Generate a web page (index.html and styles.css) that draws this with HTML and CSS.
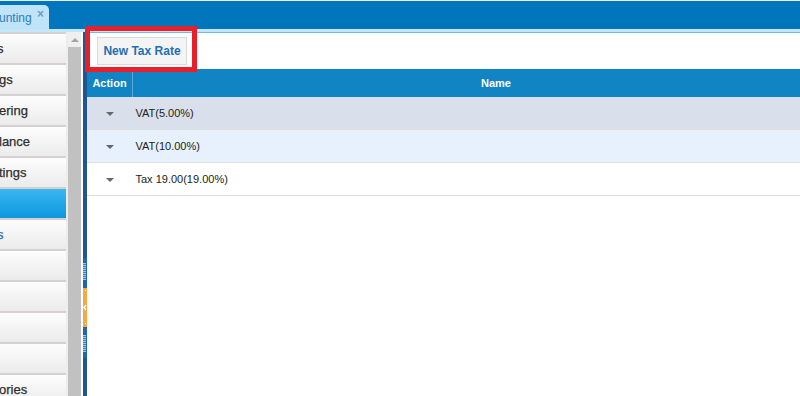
FILE: index.html
```html
<!DOCTYPE html>
<html lang="en">
<head>
  <meta charset="UTF-8">
  <meta name="viewport" content="width=device-width, initial-scale=1.0">
  <title>Tax Rates</title>
  <link rel="stylesheet" href="styles.css">
</head>
<body>
  <div class="topbar">
    <div class="tab">
      <span class="tab-title">unting</span>
      <span class="tab-close">×</span>
    </div>
  </div>
  <div class="stripe"></div>

  <div class="main">
    <ul class="nav">
      <li class="cut">s</li>
      <li>gs</li>
      <li>ering</li>
      <li>lance</li>
      <li>tings</li>
      <li class="active"></li>
      <li class="link cut">s</li>
      <li></li>
      <li></li>
      <li></li>
      <li></li>
      <li>ories</li>
    </ul>
    <div class="scroll-gap"></div>
    <div class="scrollbar">
      <div class="scroll-up"><span class="arrow-up"></span></div>
    </div>
    <div class="white-gap"></div>
    <div class="splitter">
      <div class="splitter-zone">
        <div class="ribs"></div>
        <div class="handle">
          <svg width="4" height="40" viewBox="0 0 4 40">
            <rect x="2" y="2" width="1" height="1" fill="#fff"/>
            <path d="M3 17 L1 19.5 L3 22" stroke="#fff" stroke-width="1.4" fill="none"/>
            <rect x="2" y="35" width="1" height="1" fill="#fff"/>
          </svg>
        </div>
        <div class="ribs"></div>
      </div>
    </div>

    <div class="content">
      <div class="toolbar">
        <button class="btn">New Tax Rate</button>
      </div>
      <table class="grid">
        <thead>
          <tr>
            <th class="col-action">Action</th>
            <th class="col-name">Name</th>
          </tr>
        </thead>
        <tbody>
          <tr class="hover">
            <td class="col-action"><span class="caret"></span></td>
            <td>VAT(5.00%)</td>
          </tr>
          <tr class="alt">
            <td class="col-action"><span class="caret"></span></td>
            <td>VAT(10.00%)</td>
          </tr>
          <tr>
            <td class="col-action"><span class="caret"></span></td>
            <td>Tax 19.00(19.00%)</td>
          </tr>
        </tbody>
      </table>
    </div>
  </div>

  <div class="highlight"></div>
</body>
</html>
```

FILE: styles.css
```css
body {
  margin: 0;
  height: 396px;
  overflow: hidden;
  font-family: 'Liberation Sans', Arial, sans-serif;
  background: #fff;
}
.topbar {
  height: 28px;
  background: #0276bd;
  border-top: 1px solid #e6f1f9;
  display: flex;
  align-items: flex-end;
}
.tab {
  width: 49px;
  height: 24px;
  background: #bfe4f9;
  border-top-right-radius: 5px;
  display: flex;
  align-items: center;
  justify-content: space-between;
  overflow: hidden;
}
.tab-title {
  font-size: 12px;
  color: #2b7cc0;
  margin-left: -1px;
  padding-top: 1px;
}
.tab-close {
  font-size: 12px;
  color: #6d9fc4;
  font-weight: bold;
  margin-right: 5px;
  margin-top: -7px;
}
.stripe {
  height: 3px;
  background: #c5e5f9;
}
.main {
  display: flex;
  height: 364px;
}
.nav {
  list-style: none;
  margin: 0;
  padding: 0;
  width: 66px;
  flex-shrink: 0;
  overflow: hidden;
}
.nav li {
  height: 29px;
  border-top: 2px solid #d6d0d0;
  background: linear-gradient(to bottom, #fdfdfd, #ebebeb);
  font-size: 13px;
  line-height: 29px;
  color: #2e2e2e;
  -webkit-text-stroke: 0.25px #2e2e2e;
  text-indent: -1px;
  white-space: nowrap;
}
.nav li.cut {
  text-indent: -3px;
}
.nav li.active {
  height: 29px;
  border-top: 2px solid #cfcfcf;
  border-bottom: 1px solid #0a86c6;
  margin-bottom: -1px;
  background: linear-gradient(to bottom, #3bb6f1, #0c97de);
}
.nav li.link {
  color: #2a6cb6;
  -webkit-text-stroke: 0.25px #2a6cb6;
}
.scroll-gap {
  width: 2px;
  background: #ededed;
}
.scrollbar {
  width: 13px;
  background: #c1c1c1;
}
.scroll-up {
  height: 15px;
  background: #efefef;
  display: flex;
  justify-content: center;
  align-items: center;
}
.arrow-up {
  width: 0;
  height: 0;
  border-left: 4px solid transparent;
  border-right: 4px solid transparent;
  border-bottom: 4px solid #a3a3a3;
}
.white-gap {
  width: 2px;
  background: #fff;
}
.splitter {
  width: 4px;
  background: #20568d;
  padding-top: 226px;
}
.splitter-zone {
  height: 100px;
  background: #1c69a8;
  padding-top: 5px;
  box-sizing: border-box;
  display: flex;
  flex-direction: column;
  gap: 8px;
}
.ribs {
  height: 17px;
  background:
    repeating-linear-gradient(to bottom, #9fc4e4 0, #9fc4e4 1px, #3f82bd 1px, #3f82bd 2px);
  margin-right: 1px;
}
.handle {
  height: 39px;
  background: #f8a843;
  display: flex;
}
.content {
  flex: 1;
  overflow: hidden;
  border-top: 1px solid #72b8ee;
}
.toolbar {
  height: 36px;
  padding: 4px 0 0 10px;
  box-sizing: border-box;
}
.btn {
  width: 90px;
  height: 28px;
  background: #f4f4f4;
  border: 1px solid #dadada;
  color: #1e6fb1;
  font-family: 'Liberation Sans', Arial, sans-serif;
  font-size: 12px;
  font-weight: bold;
  padding: 0;
}
.grid {
  width: 772px;
  border-collapse: collapse;
  font-size: 11px;
}
.grid th {
  height: 28px;
  padding: 0;
  background: #1185c4;
  color: #fff;
  font-weight: bold;
  text-align: center;
}
.grid th.col-action {
  border-right: 1px solid #5aa7d8;
}
.grid td {
  height: 32px;
  padding: 0 0 0 3px;
  color: #222;
  border-bottom: 1px solid #dfdfdf;
}
.grid .col-action {
  width: 45px;
  padding: 0;
  text-align: center;
}
.grid tr.hover td {
  background: #d9e0eb;
}
.grid tr.alt td {
  background: #e6f1fd;
}
.caret {
  display: inline-block;
  width: 0;
  height: 0;
  border-left: 4px solid transparent;
  border-right: 4px solid transparent;
  border-top: 4px solid #676767;
  vertical-align: middle;
}
.highlight {
  position: absolute;
  left: 85px;
  top: 26px;
  width: 102px;
  height: 36px;
  border: 5px solid #e8202b;
}
```
